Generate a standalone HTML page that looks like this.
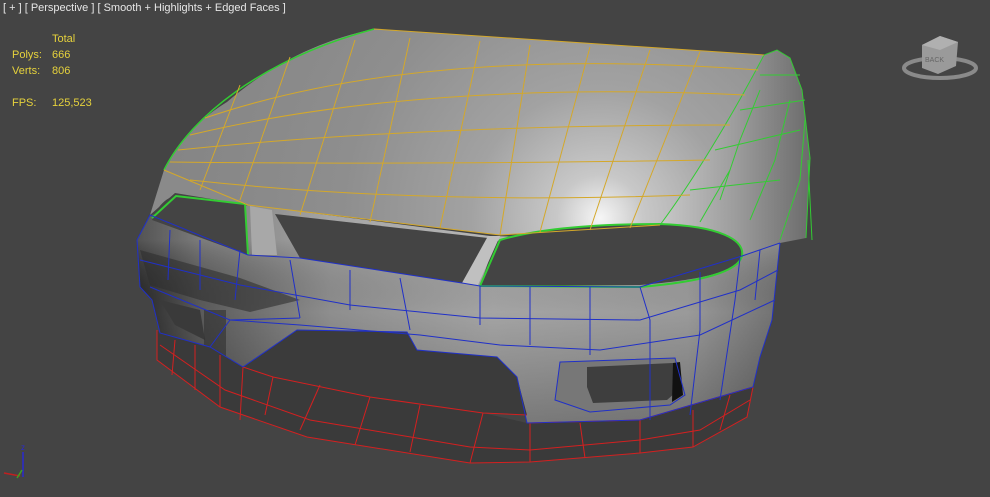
<!DOCTYPE html>
<html><head><meta charset="utf-8"><style>
html,body{margin:0;padding:0;background:#444;width:990px;height:497px;overflow:hidden}
svg{position:absolute;left:0;top:0}
.t{font-family:"Liberation Sans",sans-serif;font-size:11px;fill:#e6e6e6}
.y{font-family:"Liberation Sans",sans-serif;font-size:11px;fill:#e6d23c}
</style></head><body>
<svg width="990" height="497" viewBox="0 0 990 497" xmlns="http://www.w3.org/2000/svg">
<defs>
<radialGradient id="hood" cx="600" cy="218" r="430" gradientUnits="userSpaceOnUse">
<stop offset="0" stop-color="#f6f6f6"/><stop offset="0.1" stop-color="#c8c8c8"/><stop offset="0.3" stop-color="#a2a2a2"/><stop offset="0.6" stop-color="#8e8e8e"/><stop offset="1" stop-color="#858585"/></radialGradient>
<linearGradient id="fend" x1="660" y1="0" x2="812" y2="0" gradientUnits="userSpaceOnUse">
<stop offset="0" stop-color="#c8c8c8"/><stop offset="0.5" stop-color="#9c9c9c"/><stop offset="1" stop-color="#6a6a6a"/></linearGradient>
<linearGradient id="bump" x1="135" y1="0" x2="785" y2="0" gradientUnits="userSpaceOnUse">
<stop offset="0" stop-color="#262626"/><stop offset="0.1" stop-color="#5a5a5a"/><stop offset="0.3" stop-color="#8e8e8e"/><stop offset="0.55" stop-color="#a4a4a4"/><stop offset="0.85" stop-color="#9a9a9a"/><stop offset="1" stop-color="#6e6e6e"/></linearGradient>
<linearGradient id="bumpv" x1="0" y1="240" x2="0" y2="420" gradientUnits="userSpaceOnUse">
<stop offset="0" stop-color="#ffffff" stop-opacity="0.2"/><stop offset="0.4" stop-color="#000" stop-opacity="0"/><stop offset="1" stop-color="#000" stop-opacity="0.25"/></linearGradient>
</defs>
<rect width="990" height="497" fill="#444"/>
<path d="M137,240 L150,215 L250,205 L490,236 L740,242 L780,243 L772,320 L760,357 L753,387 L640,420 L527,423 L517,377 L497,357 L417,350 L407,332 L297,330 L243,367 L227,367 L210,347 L160,333 L152,300 L140,287 Z" fill="url(#bump)"/>
<path d="M137,240 L150,215 L250,205 L490,236 L740,242 L780,243 L772,320 L760,357 L753,387 L640,420 L527,423 L517,377 L497,357 L417,350 L407,332 L297,330 L243,367 L227,367 L210,347 L160,333 L152,300 L140,287 Z" fill="url(#bumpv)"/>
<path d="M140,250 L240,278 L300,300 L250,312 L200,300 L150,285 Z" fill="#2e2e2e" opacity="0.6"/>
<path d="M243,367 L297,330 L407,332 L417,350 L497,357 L517,377 L527,415 L483,413 L370,397 L273,377 Z" fill="#3b3b3b"/>
<path d="M160,300 L200,310 L205,340 L175,325 Z" fill="#3a3a3a"/>
<rect x="204" y="310" width="22" height="55" fill="#2f2f2f" opacity="0.6"/>
<path d="M157,330 L160,333 L210,347 L243,367 L273,377 L370,397 L483,413 L527,423 L640,420 L753,387 L747,417 L693,447 L640,453 L530,462 L470,463 L307,437 L220,407 L157,360 Z" fill="#3a3a3a"/>
<g stroke="#d42020" stroke-width="1" fill="none">
<path d="M157,330 L157,360 L220,407 L307,437 L470,463 L530,462 L640,453 L693,447 L747,417 L753,387"/>
<path d="M243,367 L273,377 L370,397 L483,413 L527,415"/>
<path d="M527,423 L640,420 L753,387"/>
<path d="M160,345 L225,390 L310,420 L470,447 L530,450 L640,440 L700,430 L750,400"/>
<path d="M273,377 L265,415 M320,385 L300,430 M370,397 L355,445 M420,405 L410,452 M483,413 L470,463 M530,423 L530,462 M580,423 L585,458 M640,420 L640,453 M693,410 L693,447 M730,395 L720,430 M175,340 L172,375 M195,345 L195,390 M220,355 L220,407 M243,367 L240,420"/>
</g>
<path d="M560,362 L675,358 L685,395 L670,405 L590,412 L555,400 Z" fill="#777"/>
<path d="M587,367 L673,363 L675,393 L667,400 L593,403 L587,387 Z" fill="#3e3e3e"/>
<path d="M673,363 L680,362 L683,395 L672,402 Z" fill="#111"/>
<path d="M227,102 C270,65 320,40 374,29 L764,55 C730,120 690,185 660,225 L500,235 L248,205 C220,195 190,183 164,170 C175,145 200,118 227,102 Z" fill="url(#hood)"/>
<path d="M764,55 L777,50 L790,58 L802,90 L810,158 L806,238 L780,243 L742,255 C735,235 700,224 660,225 C690,185 730,120 764,55 Z" fill="url(#fend)"/>
<path d="M164,170 L150,215 L175,193 L248,205 Z" fill="#8a8a8a"/>
<path d="M495,242 C520,230 600,224 660,224 C720,226 745,240 742,256 C738,272 700,280 640,285 L480,286 Z" fill="#444"/>
<path d="M176,196 L245,204 L248,255 L152,220 C157,207 166,197 176,196 Z" fill="#444"/>
<path d="M275,214 L488,238 L462,283 L300,258 Z" fill="#444"/>
<path d="M250,206 L272,210 L277,255 L252,255 Z" fill="#a8a8a8"/>
<path d="M488,236 L500,236 L478,285 L462,283 Z" fill="#c0c0c0"/>
<g stroke="#33cc33" fill="none" stroke-width="1">
<path d="M164,170 C190,118 260,60 374,29" stroke-width="1.5"/>
<path d="M152,218 L176,196 L245,204 L248,255" stroke-width="2"/>
<path d="M480,286 L500,240 C540,228 600,224 660,224 C720,226 745,240 742,256 C738,272 700,282 640,287 L480,286" stroke-width="2"/>
<path d="M660,225 C690,185 730,120 764,55 L777,50 L790,58 L802,90 L810,158 L806,238"/>
<path d="M690,190 L780,180 M715,150 L800,130 M740,110 L805,100 M760,75 L800,75 M720,200 L740,140 L760,90 M750,220 L775,160 L790,100 M780,240 L800,180 L805,120 M700,222 L730,170 M808,160 L812,240"/>
</g>
<g stroke="#d4a82a" fill="none" stroke-width="1">
<path d="M374,29 L764,55"/>
<path d="M164,170 L248,205 L500,235 L660,225"/>
<path d="M205,118 Q420,45 758,70"/>
<path d="M190,135 Q420,80 745,95"/>
<path d="M178,150 Q420,125 730,125"/>
<path d="M170,162 Q420,165 710,160"/>
<path d="M190,180 Q420,205 690,195"/>
<path d="M240,85 L200,190 M290,57 L240,200 M355,40 L300,215 M410,38 L370,222 M480,41 L440,228 M530,45 L500,235 M590,47 L540,232 M650,50 L590,230 M700,52 L630,228"/>
</g>
<g stroke="#2030c8" fill="none" stroke-width="1">
<path d="M137,240 L150,215 L248,255 L300,258 L462,283 L480,286 L640,287 L742,256 L780,243"/>
<path d="M137,240 L140,287 L152,300 L160,333 L210,347 L243,367"/>
<path d="M780,243 L772,320 L760,357 L753,387 L640,420 L527,423 L517,377 L497,357 L417,350 L407,332 L297,330 L243,367"/>
<path d="M140,260 L240,285 L350,305 L480,318 L640,320 L740,290 L778,270"/>
<path d="M150,287 L230,320 L300,325 L420,335 L500,345 L600,350 L700,335 L775,300"/>
<path d="M560,362 L675,358 L685,395 L670,405 L590,412 L555,400 Z"/>
<path d="M170,230 L168,280 M200,240 L200,290 M240,250 L235,300 M290,260 L300,318 M350,270 L350,310 M400,278 L410,330 M480,286 L480,325 M530,287 L530,345 M590,287 L590,355 M640,287 L650,320 L650,420 M700,272 L700,330 L690,415 M740,258 L735,300 L720,400 M760,250 L755,300 M210,347 L230,320 L300,318"/>
</g>
<text class="t" x="3" y="11">[ + ] [ Perspective ] [ Smooth + Highlights + Edged Faces ]</text>
<text class="y" x="52" y="42">Total</text>
<text class="y" x="12" y="58">Polys:</text><text class="y" x="52" y="58">666</text>
<text class="y" x="12" y="74">Verts:</text><text class="y" x="52" y="74">806</text>
<text class="y" x="12" y="106">FPS:</text><text class="y" x="52" y="106">125,523</text>
<ellipse cx="940" cy="68" rx="36" ry="10" fill="none" stroke="#8a8a8a" stroke-width="4"/>
<path d="M922,45 L940,36 L958,42 L956,66 L938,74 L922,68 Z" fill="#9a9a9a"/>
<path d="M922,45 L940,36 L958,42 L940,50 Z" fill="#b0b0b0"/>
<text x="925" y="62" font-family="Liberation Sans,sans-serif" font-size="7" fill="#666">BACK</text>
<line x1="23" y1="477" x2="23" y2="452" stroke="#2a2ad0" stroke-width="1.5"/>
<text x="21" y="450" font-family="Liberation Sans,sans-serif" font-size="8" fill="#2a2ad0">z</text>
<line x1="4" y1="473" x2="20" y2="476" stroke="#c02020" stroke-width="1.5"/>
<line x1="17" y1="478" x2="22" y2="470" stroke="#40a020" stroke-width="1.5"/>
</svg>
</body></html>
